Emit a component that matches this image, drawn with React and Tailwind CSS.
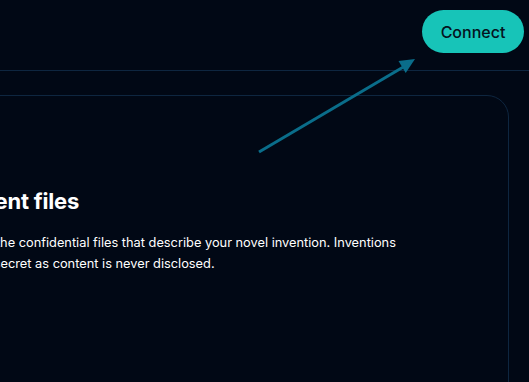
export default function App() {
  return (
    <div
      className="relative w-[529px] h-[382px] overflow-hidden bg-[#010815] text-white"
      style={{ fontFamily: "Inter, 'Liberation Sans', sans-serif" }}
    >
      <header className="h-[71px] border-b border-[#0e2640] flex items-start justify-end pr-[5px] pt-[10px]">
        <button className="h-[43px] w-[102px] rounded-full bg-[#17c4b8] text-[#051320] text-[16px] font-medium">
          Connect
        </button>
      </header>
      <div className="pt-[24px] pr-[20px]">
        <div className="ml-[-100px] h-[400px] rounded-[22px] border border-[#0e2640] pl-[48px] pt-[90px]">
          <h1 className="ml-[-5px] text-[22px] leading-[30px] font-bold tracking-[-0.2px]">Content files</h1>
          <p className="mt-[16px] text-[12.8px] leading-[21px] whitespace-nowrap">
            Upload the confidential files that describe your novel invention. Inventions
            <br />
            remain secret as content is never disclosed.
          </p>
        </div>
      </div>
      <svg className="absolute left-0 top-0 pointer-events-none" width="529" height="382">
        <line x1="259" y1="152" x2="405" y2="66" stroke="#0a6d8a" strokeWidth="3" />
        <polygon points="415,59 398.5,61 405.7,73" fill="#0a6d8a" />
      </svg>
    </div>
  );
}
